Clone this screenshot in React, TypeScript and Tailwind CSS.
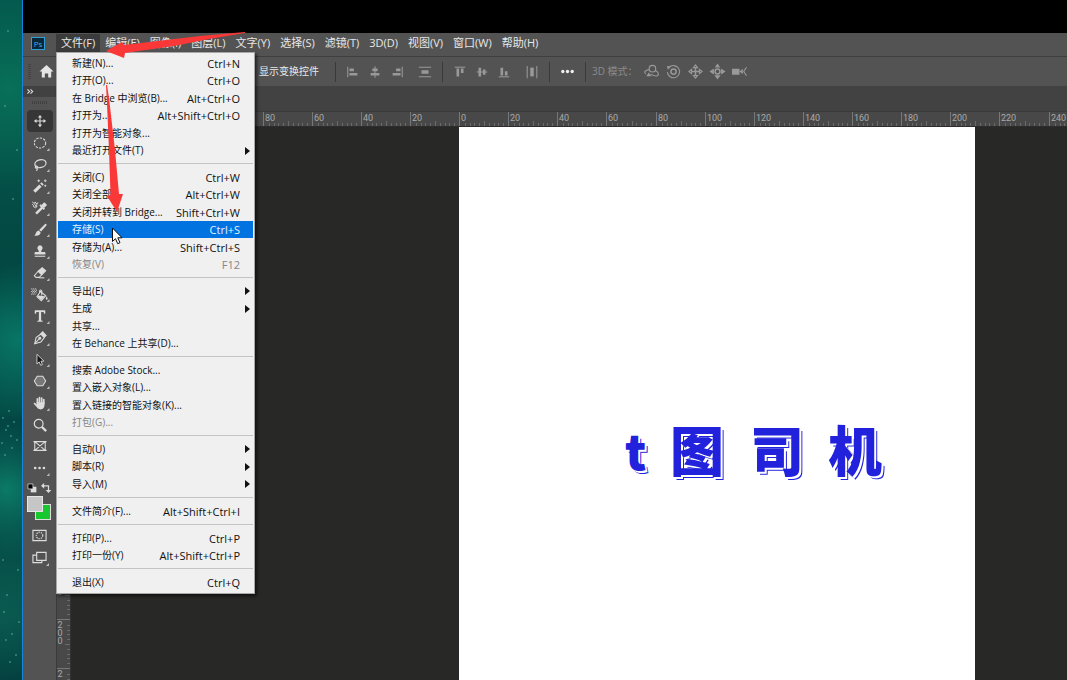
import React from "react";
import clsx from "clsx";

const MENUS = [
  "文件(F)",
  "编辑(E)",
  "图像(I)",
  "图层(L)",
  "文字(Y)",
  "选择(S)",
  "滤镜(T)",
  "3D(D)",
  "视图(V)",
  "窗口(W)",
  "帮助(H)",
];

type Item = {
  label: string;
  keys?: string;
  sub?: boolean;
  disabled?: boolean;
  active?: boolean;
};

const FILE_MENU: Item[][] = [
  [
    { label: "新建(N)...", keys: "Ctrl+N" },
    { label: "打开(O)...", keys: "Ctrl+O" },
    { label: "在 Bridge 中浏览(B)...", keys: "Alt+Ctrl+O" },
    { label: "打开为...", keys: "Alt+Shift+Ctrl+O" },
    { label: "打开为智能对象..." },
    { label: "最近打开文件(T)", sub: true },
  ],
  [
    { label: "关闭(C)", keys: "Ctrl+W" },
    { label: "关闭全部", keys: "Alt+Ctrl+W" },
    { label: "关闭并转到 Bridge...", keys: "Shift+Ctrl+W" },
    { label: "存储(S)", keys: "Ctrl+S", active: true },
    { label: "存储为(A)...", keys: "Shift+Ctrl+S" },
    { label: "恢复(V)", keys: "F12", disabled: true },
  ],
  [
    { label: "导出(E)", sub: true },
    { label: "生成", sub: true },
    { label: "共享..." },
    { label: "在 Behance 上共享(D)..." },
  ],
  [
    { label: "搜索 Adobe Stock..." },
    { label: "置入嵌入对象(L)..." },
    { label: "置入链接的智能对象(K)..." },
    { label: "打包(G)...", disabled: true },
  ],
  [
    { label: "自动(U)", sub: true },
    { label: "脚本(R)", sub: true },
    { label: "导入(M)", sub: true },
  ],
  [{ label: "文件简介(F)...", keys: "Alt+Shift+Ctrl+I" }],
  [
    { label: "打印(P)...", keys: "Ctrl+P" },
    { label: "打印一份(Y)", keys: "Alt+Shift+Ctrl+P" },
  ],
  [{ label: "退出(X)", keys: "Ctrl+Q" }],
];

const Icon = ({
  children,
  className = "size-4",
}: {
  children: React.ReactNode;
  className?: string;
}) => (
  <svg
    viewBox="0 0 16 16"
    className={clsx("shrink-0 overflow-visible", className)}
    fill="none"
    stroke="currentColor"
    strokeWidth="1.2"
    aria-hidden="true"
  >
    {children}
  </svg>
);

const TOOLS: { name: string; plain?: boolean; icon: React.ReactNode }[] = [
  {
    name: "移动工具",
    plain: true,
    icon: (
      <>
        <path d="M8 2.5v11M2.5 8h11" />
        <path
          d="M8 1l2.4 3H5.6zM8 15l2.4-3H5.6zM1 8l3-2.4v4.8zM15 8l-3-2.4v4.8z"
          fill="currentColor"
          stroke="none"
        />
      </>
    ),
  },
  {
    name: "椭圆选框工具",
    icon: <ellipse cx="8" cy="8" rx="6.500" ry="5.800" strokeDasharray="2.6 1.4" />,
  },
  {
    name: "套索工具",
    icon: (
      <>
        <ellipse cx="8.5" cy="6.500" rx="6.500" ry="4.400" transform="rotate(-14 8.5 6.5)" strokeWidth="1.400" />
        <path d="M4.500 9c-2 .2-2.400 2.200-.8 2.500 1.600.1 2.300-1.300 1.200-2.200M4.500 11.500c.6 1 .3 2.300-.5 3.200" strokeWidth="1.400" />
      </>
    ),
  },
  {
    name: "魔棒工具",
    icon: (
      <>
        <path d="M1.500 14.500L8.500 7.500" strokeWidth="3.600" />
        <path d="M9.500 6.500l1.500-1.500" strokeWidth="3.600" />
        <path d="M6.500 .5v3M5 2h3M14 .5v3M12.500 2h3M14 6.500v2.400M12.800 7.700h2.400" strokeWidth="1" />
      </>
    ),
  },
  {
    name: "吸管工具",
    icon: (
      <>
        <path d="M3.500 14.500l7-7" strokeWidth="2.800" />
        <path d="M8 4.500L13 9.500" strokeWidth="2.200" />
        <path d="M11 6.500l3.500-3.500" strokeWidth="4.600" />
        <path d="M-1 1l2.500 2 1-2 1 2 2.500-1M-1 3.500l2.500 2.500M1.500 3l2.500 3.500M5 2.500L3 7M0 6l3 2 2-2.500" strokeWidth="1" />
      </>
    ),
  },
  {
    name: "画笔工具",
    icon: (
      <>
        <path d="M15 1c.8.500.6 1.200 0 2L9.300 9.800 7 8l6.500-6.500c.5-.6 1-.8 1.500-.5z" fill="currentColor" stroke="none" />
        <path d="M6.300 8.700l2.300 2c.2 2.800-2.800 4.600-7.100 3.800 1.800-.8 1.400-4.700 4.800-5.800z" fill="currentColor" stroke="none" />
      </>
    ),
  },
  {
    name: "仿制图章工具",
    icon: (
      <>
        <path d="M8 1.500a3 3 0 012.200 5c-.8 1-.8 1.500-.7 2.500H13c.8 0 1.200.5 1.200 1.200V12H1.800v-1.800C1.800 9.500 2.200 9 3 9h3.500c.1-1 .1-1.500-.7-2.500A3 3 0 018 1.500z" fill="currentColor" stroke="none" />
        <path d="M2 14h12" />
      </>
    ),
  },
  {
    name: "橡皮擦工具",
    icon: (
      <>
        <path d="M6 6l4.500-4 4 3.500L10 10z" fill="currentColor" />
        <path d="M6 6l4 4-3 3H3.500L1.500 11z" />
        <path d="M7 13.500h6" />
      </>
    ),
  },
  {
    name: "油漆桶工具",
    icon: (
      <>
        <path d="M8.500 4l6 5-5 5.500-5-4.500z" />
        <path d="M6 8.500l7.500.8-4 4.400-4.500-4z" fill="currentColor" stroke="none" />
        <path d="M10 8.500V3.500c0-1.600-2.400-1.600-2.400 0v2" />
        <path d="M15.500 9.500c1.500 2 1.500 4 .2 4s-1.400-2-.2-4z" fill="currentColor" stroke="none" />
        <path d="M-2 1h6M-1 2.500h6M-2 4h6M-1 5.500h5M-2 7h5" strokeDasharray="1.200 1" strokeWidth="1.100" />
      </>
    ),
  },
  {
    name: "横排文字工具",
    icon: (
      <path
        d="M2 1.500h12v4h-1.300L12 3.400H9.300v9.600l1.700.5v1H5v-1l1.700-.5V3.400H4L3.300 5.500H2z"
        fill="currentColor"
        stroke="none"
      />
    ),
  },
  {
    name: "钢笔工具",
    icon: (
      <>
        <path d="M2 14.500L3.500 7.500 9 3.500l4 4L9 12.500z" />
        <path d="M9 3l2-2 4 4.200-2 1.800z" fill="currentColor" />
        <path d="M2 14.500l5-5.500" />
        <circle cx="7.800" cy="8.200" r="1.100" fill="currentColor" />
      </>
    ),
  },
  {
    name: "路径选择工具",
    icon: <path d="M4.500 1.500v11l2.600-2.300 1.700 3.900 2-.9-1.700-3.800 3.400-.2z" fill="#161616" strokeWidth="1" />,
  },
  {
    name: "多边形工具",
    icon: <path d="M4.800 2.500h6.400L14.500 8l-3.300 5.500H4.800L1.500 8z" fill="#777" />,
  },
  {
    name: "抓手工具",
    icon: (
      <>
        <path d="M5 8V3.300M7.400 7.500V1.800M9.900 7.500V2.300M12.300 8.500V4" strokeWidth="1.900" strokeLinecap="round" />
        <path d="M4.100 7h9.100v3c0 3-1.500 5.300-4.500 5.300-2.200 0-3.500-1-4.500-2.600L1 9c-.6-1 .7-1.700 1.500-.9l1.600 1.500z" fill="currentColor" stroke="none" />
      </>
    ),
  },
  {
    name: "缩放工具",
    plain: true,
    icon: (
      <>
        <circle cx="6.500" cy="6.500" r="5" strokeWidth="1.400" />
        <path d="M10 10l5 5" strokeWidth="2.600" />
      </>
    ),
  },
  {
    name: "图框工具",
    plain: true,
    icon: <path d="M2 3h12v10H2zM2 3l12 10M14 3L2 13M.5 3h15M.5 13h15" strokeWidth="1.200" />,
  },
  {
    name: "编辑工具栏",
    icon: (
      <g fill="currentColor" stroke="none">
        <circle cx="2.500" cy="8" r="1.500" />
        <circle cx="7.500" cy="8" r="1.500" />
        <circle cx="12.500" cy="8" r="1.500" />
      </g>
    ),
  },
];

const ALIGN_A = [
  { name: "左对齐", d: "M2 2v12", f: "M4 4h5v3H4zM4 9h9v3H4z" },
  { name: "水平居中对齐", d: "M8 1.500v13", f: "M5 4h6v3H5zM3 9h10v3H3z" },
  { name: "右对齐", d: "M14 2v12", f: "M7 4h5v3H7zM3 9h9v3H3z" },
];
const ALIGN_B = [
  { name: "顶对齐", d: "M2 2.500h12", f: "M4 4h3v9H4zM9 4h3v5H9z" },
  { name: "垂直居中对齐", d: "M2 8h12", f: "M4 3h3v10H4zM9 5h3v6H9z" },
  { name: "底对齐", d: "M2 13.500h12", f: "M4 3h3v9H4zM9 7h3v5H9z" },
];

const AlignButton = ({ name, d, f }: { name: string; d: string; f: string }) => (
  <button aria-label={name} className="flex h-6 w-[22px] items-center justify-center">
    <Icon className="size-[14px]">
      <path d={d} />
      <path d={f} fill="currentColor" stroke="none" />
    </Icon>
  </button>
);

const Divider = () => <div className="h-5 w-px bg-[#3a3a3a]" />;

const MenuBar = () => (
  <nav className="flex h-[23px] items-start bg-[#535353] text-[#e8e8e8]">
    <span className="mt-1 ml-2 flex h-[13px] w-[14px] items-center justify-center border border-[#2f9fd8] bg-[#0b2636] text-[8px] leading-none text-[#39aef0]">
      Ps
    </span>
    <div className="ml-[11px] flex pt-[1px]">
      {MENUS.map((m, i) => (
        <button
          key={m}
          className={clsx(
            "h-[18px] px-[5px] text-[11px] leading-[18px] whitespace-nowrap",
            i === 0 && "bg-[#3b3b3b]"
          )}
        >
          {m}
        </button>
      ))}
    </div>
  </nav>
);

const OptionsBar = () => (
  <div className="flex h-[30px] items-center border-t border-[#3e3e3e] bg-[#535353] text-[#999]">
    <div className="ml-[5px] h-4 w-[3px] bg-[repeating-linear-gradient(#444_0_1px,transparent_1px_2px)]" />
    <button aria-label="主页" className="ml-2 text-[#e6e6e6]">
      <Icon className="size-[15px]">
        <path d="M8 1l7.500 7H13v6.500H9.800V10H6.200v4.500H3V8H.5z" fill="currentColor" stroke="none" />
      </Icon>
    </button>
    <button className="ml-[205px] text-[10px] text-[#e8e8e8]">显示变换控件</button>
    <div className="ml-4 flex items-center">
      <Divider />
      <div className="flex px-[6px]">
        {ALIGN_A.map((a) => (
          <AlignButton key={a.name} {...a} />
        ))}
      </div>
      <AlignButton name="垂直分布" d="M1 2.500h14M1 13.500h14" f="M4 6h8v4H4z" />
      <div className="ml-[6px]">
        <Divider />
      </div>
      <div className="flex px-[6px]">
        {ALIGN_B.map((a) => (
          <AlignButton key={a.name} {...a} />
        ))}
      </div>
      <AlignButton name="水平分布" d="M2.500 1v14M13.500 1v14" f="M6 3h4v10H6z" />
      <div className="ml-[6px]">
        <Divider />
      </div>
      <button aria-label="更多" className="flex h-6 w-[35px] items-center justify-center text-[#eee]">
        <Icon className="size-[15px]">
          <g fill="currentColor" stroke="none">
            <circle cx="3" cy="8" r="1.800" />
            <circle cx="8" cy="8" r="1.800" />
            <circle cx="13" cy="8" r="1.800" />
          </g>
        </Icon>
      </button>
      <Divider />
      <span className="ml-[6px] w-12 text-[10px] whitespace-nowrap text-[#8a8a8a]">3D 模式：</span>
      <div className="flex gap-[7px] pl-1">
        <Icon className="size-[15px]">
          <circle cx="9" cy="5" r="3.500" />
          <path d="M5.500 6C1 6.500-.5 9 2 10.500M12 7c3.500 1.500 4.500 4.500 2 5.500-2 .8-5-.5-7-1.500" />
          <path d="M2.500 13l2.500-4 3 4z" fill="currentColor" stroke="none" />
        </Icon>
        <Icon className="size-[15px]">
          <circle cx="8" cy="8" r="2.800" strokeWidth="1.600" />
          <path d="M3 4a6.500 6.500 0 11-1.500 4.500" />
          <path d="M1 2l4.500.5L2 6z" fill="currentColor" stroke="none" />
        </Icon>
        <Icon className="size-[15px]">
          <path d="M8 4v8M4 8h8" strokeWidth="1.600" />
          <path d="M8 1l2.200 2.800H5.800zM8 15l2.200-2.800H5.800zM1 8l2.800-2.200v4.400zM15 8l-2.800-2.200v4.400z" />
        </Icon>
        <Icon className="size-[15px]">
          <circle cx="8" cy="8" r="2.600" strokeWidth="1.600" />
          <path d="M8 .5l1.800 2.500H6.200zM8 15.500l2.200-3H5.800zM.5 8L3.500 6v4zM15.500 8l-3-2v4z" fill="currentColor" />
        </Icon>
        <Icon className="size-[15px]">
          <path d="M0 5h8v6.500H0zM8 8l3.500-3v6z" fill="currentColor" stroke="none" />
          <path d="M15.500 3.500L12.500 8l3 4.500" />
        </Icon>
      </div>
    </div>
  </div>
);

const Toolbar = () => (
  <aside className="flex w-[33px] shrink-0 flex-col items-center bg-[#535353] text-[#dcdcdc]">
    <div className="flex h-[11px] w-full items-center bg-[#414141] pl-1">
      <Icon className="size-[7px]">
        <path d="M1 3l5 5-5 5M8 3l5 5-5 5" strokeWidth="2.500" />
      </Icon>
    </div>
    <div className="mt-1 h-[3px] w-4 bg-[repeating-linear-gradient(90deg,#404040_0_1px,transparent_1px_2px)]" />
    <div className="mt-[6px] flex flex-col">
      {TOOLS.map((t, i) => (
        <button
          key={t.name}
          aria-label={t.name}
          className={clsx(
            "relative flex h-[22px] w-[26px] items-center justify-center [&:nth-child(3n)]:h-[21px]",
            i === 0 && "rounded-sm bg-[#363636]"
          )}
        >
          <Icon className="size-[14px]">{t.icon}</Icon>
          {!t.plain && (
            <span className="absolute right-[3px] bottom-[3px] size-[3px] bg-[#bbb] [clip-path:polygon(100%_0,100%_100%,0_100%)]" />
          )}
        </button>
      ))}
    </div>
    <div className="mt-1 mr-[2px] flex w-6 items-center justify-between">
      <button aria-label="默认颜色">
        <Icon className="size-[10px]">
          <path d="M6 6h9v9H6z" fill="#ddd" stroke="none" />
          <path d="M1.500 1.500h8v8h-8z" fill="#000" />
        </Icon>
      </button>
      <button aria-label="切换颜色">
        <Icon className="size-[10px]">
          <path d="M3 4.500h9v8" strokeWidth="2" />
          <path d="M5 0v9L0 4.500zM7.500 11h9L12 16z" fill="currentColor" stroke="none" />
        </Icon>
      </button>
    </div>
    <div className="relative mt-[3px] mr-[2px] h-6 w-6">
      <button aria-label="背景色" className="absolute right-0 bottom-0 size-4 border border-[#ddd] bg-[#16c72e]" />
      <button aria-label="前景色" className="absolute top-0 left-0 size-4 border border-[#e6e6e6] bg-[#c6c6c6]" />
    </div>
    <button aria-label="快速蒙版" className="mt-2">
      <Icon className="size-[15px]">
        <path d="M1 2.500h14v11H1z" />
        <circle cx="8" cy="8" r="3.500" strokeDasharray="1.500 1" />
      </Icon>
    </button>
    <button aria-label="屏幕模式" className="relative mt-[7px]">
      <Icon className="size-[15px]">
        <path d="M5 5.500H1v8h9.500V11" />
        <path d="M5 2.500h10V11H5z" />
      </Icon>
      <span className="absolute -right-[2px] -bottom-[1px] size-[3px] bg-[#bbb] [clip-path:polygon(100%_0,100%_100%,0_100%)]" />
    </button>
  </aside>
);

const H_MARKS = [80, 60, 40, 20, 0, 20, 40, 60, 80, 100, 120, 140, 160, 180, 200, 220, 240];
const V_MARKS = ["", "", "", "", "", "", "", "", "", "180", "200", "2"];
const TICKS = Array.from({ length: 10 }, (_, i) => i);

const HorizontalRuler = () => (
  <div className="flex h-4 overflow-hidden border-t border-b border-t-[#3a3a3a] border-b-[#2c2c2c] bg-[#484848] pl-[206px]">
    {H_MARKS.map((m, i) => (
      <div
        key={i}
        className="relative flex w-[49px] shrink-0 items-end border-l border-[#777] [&:nth-child(8n)]:w-[50px]"
      >
        <span className="absolute top-[2px] left-[1px] font-[Roboto] text-[9px] leading-[9px] text-[#a8a8a8]">{m}</span>
        {TICKS.map((t) => (
          <i
            key={t}
            className={clsx("flex-1 border-l", t === 0 ? "border-transparent" : "border-[#6a6a6a]", t === 5 ? "h-[5px]" : "h-[3px]")}
          />
        ))}
      </div>
    ))}
  </div>
);

const VerticalRuler = () => (
  <div className="w-[14px] shrink-0 overflow-hidden border-r border-[#333] bg-[#484848] pt-[2px]">
    {V_MARKS.map((m, i) => (
      <div key={i} className="relative flex h-[49px] flex-col items-end border-t border-[#777]">
        <span className="absolute top-[1px] left-0 w-[6px] text-center font-[Roboto] text-[9px] leading-[8px] break-all text-[#a8a8a8]">
          {m}
        </span>
        {TICKS.map((t) => (
          <i
            key={t}
            className={clsx("flex-1 border-t", t === 0 ? "border-transparent" : "border-[#6a6a6a]", t === 5 ? "w-[5px]" : "w-[3px]")}
          />
        ))}
      </div>
    ))}
  </div>
);

const Artboard = () => (
  <div className="ml-[388px] w-[516px] shrink-0 bg-white">
    <div className="flex items-center pt-[287px] pl-[166px] font-['Noto_Sans_CJK_SC',sans-serif] text-[54px] leading-[70px] font-black text-[#2222dd] [text-shadow:1px_1px_0_#fff,2px_2px_0_#fff,3px_3px_0_#2222dd]">
      <span className="w-[45px] text-5xl leading-[70px]">t</span>
      <span className="w-20">图</span>
      <span className="w-[78px]">司</span>
      <span>机</span>
    </div>
  </div>
);

const FileMenu = () => (
  <div
    role="menu"
    className="absolute top-[52px] left-14 w-[199px] border border-[#a8a8a8] bg-[#f0f0f0] px-[1px] pt-[1px] pb-[2px] text-[#111] shadow-[2px_2px_3px_rgba(0,0,0,0.6)]"
  >
    {FILE_MENU.map((group, g) => (
      <React.Fragment key={g}>
        {g > 0 && <hr className="my-1 border-[#c4c4c4]" />}
        <div>
          {group.map((item) => (
            <button
              key={item.label}
              role="menuitem"
              disabled={item.disabled}
              className={clsx(
                "flex w-full items-center justify-between pr-[13px] pl-[14px] text-[10px] leading-[17px] whitespace-nowrap odd:h-[18px] even:h-[17px]",
                item.active && "bg-[#0073e0] text-[#e4f1ff]",
                item.disabled && "text-[#868686]"
              )}
            >
              <span>{item.label}</span>
              {item.keys && <span className="text-[11px]">{item.keys}</span>}
              {item.sub && (
                <svg viewBox="0 0 5 8" className="-mr-[10px] h-2 w-[5px]" aria-hidden="true">
                  <path d="M0 0l5 4-5 4z" fill="currentColor" />
                </svg>
              )}
            </button>
          ))}
        </div>
      </React.Fragment>
    ))}
  </div>
);

const Annotations = () => (
  <svg
    width="260"
    height="260"
    viewBox="0 0 260 260"
    className="pointer-events-none absolute top-0 left-0"
    aria-hidden="true"
  >
    <path d="M245 32L200 36 166 40 124 45 122 42 106 51 124 58 125 53 174 46 212 38.500 245 33z" fill="#fb3838" />
    <path d="M106 85L107 104 109 150 110.500 195 107 196 117 212 123 194 119 194 115 150 109 98 107 85z" fill="#fb3838" />
    <path
      d="M112.500 228v13.500l3-2.800 2.200 5 2.300-1-2.200-4.900h4.200z"
      fill="#fff"
      stroke="#111"
      strokeWidth="1"
    />
  </svg>
);

const Wallpaper = () => (
  <div className="w-[23px] shrink-0 border-r border-[#1683e0] bg-[radial-gradient(circle_at_30%_72%,#0b7a66_0,transparent_70px),radial-gradient(circle_at_40%_13%,#087058_0,transparent_100px),radial-gradient(circle_at_80%_50%,#087565_0,transparent_80px),radial-gradient(circle_at_20%_90%,#0a5a50_0,transparent_90px),linear-gradient(#03574d,#045048_25%,#024640_40%,#044a45_60%,#02343a_68%,#044c45_85%,#02383a)]">
    <svg viewBox="0 0 22 680" className="h-[680px] w-[22px]" fill="#5cc0b8" aria-hidden="true">
      {[
        [5, 106], [8, 31], [13, 199], [17, 150], [3, 418], [9, 411], [14, 422], [6, 430], [11, 436],
        [2, 443], [17, 440], [12, 448], [5, 455], [8, 426], [7, 595], [4, 612], [19, 622], [6, 640],
        [12, 634], [16, 655], [3, 560], [18, 570], [10, 662],
      ].map(([x, y]) => (
        <circle key={`${x}-${y}`} cx={x} cy={y} r="0.9" opacity="0.6" />
      ))}
    </svg>
  </div>
);

export default function App() {
  return (
    <div className="relative flex h-screen w-full overflow-hidden bg-black font-['Open_Sans','Noto_Sans_CJK_SC',sans-serif]">
      <Wallpaper />
      <div className="flex min-w-0 flex-1 flex-col">
        <div className="h-[33px] shrink-0 bg-black" />
        <MenuBar />
        <OptionsBar />
        <div className="flex min-h-0 flex-1">
          <Toolbar />
          <main className="flex min-w-0 flex-1 flex-col border-l border-[#3a3a3a]">
            <div className="h-[25px] shrink-0 bg-[#424242]" />
            <HorizontalRuler />
            <div className="flex min-h-0 flex-1 bg-[#282826]">
              <VerticalRuler />
              <Artboard />
            </div>
          </main>
        </div>
      </div>
      <FileMenu />
      <Annotations />
    </div>
  );
}
